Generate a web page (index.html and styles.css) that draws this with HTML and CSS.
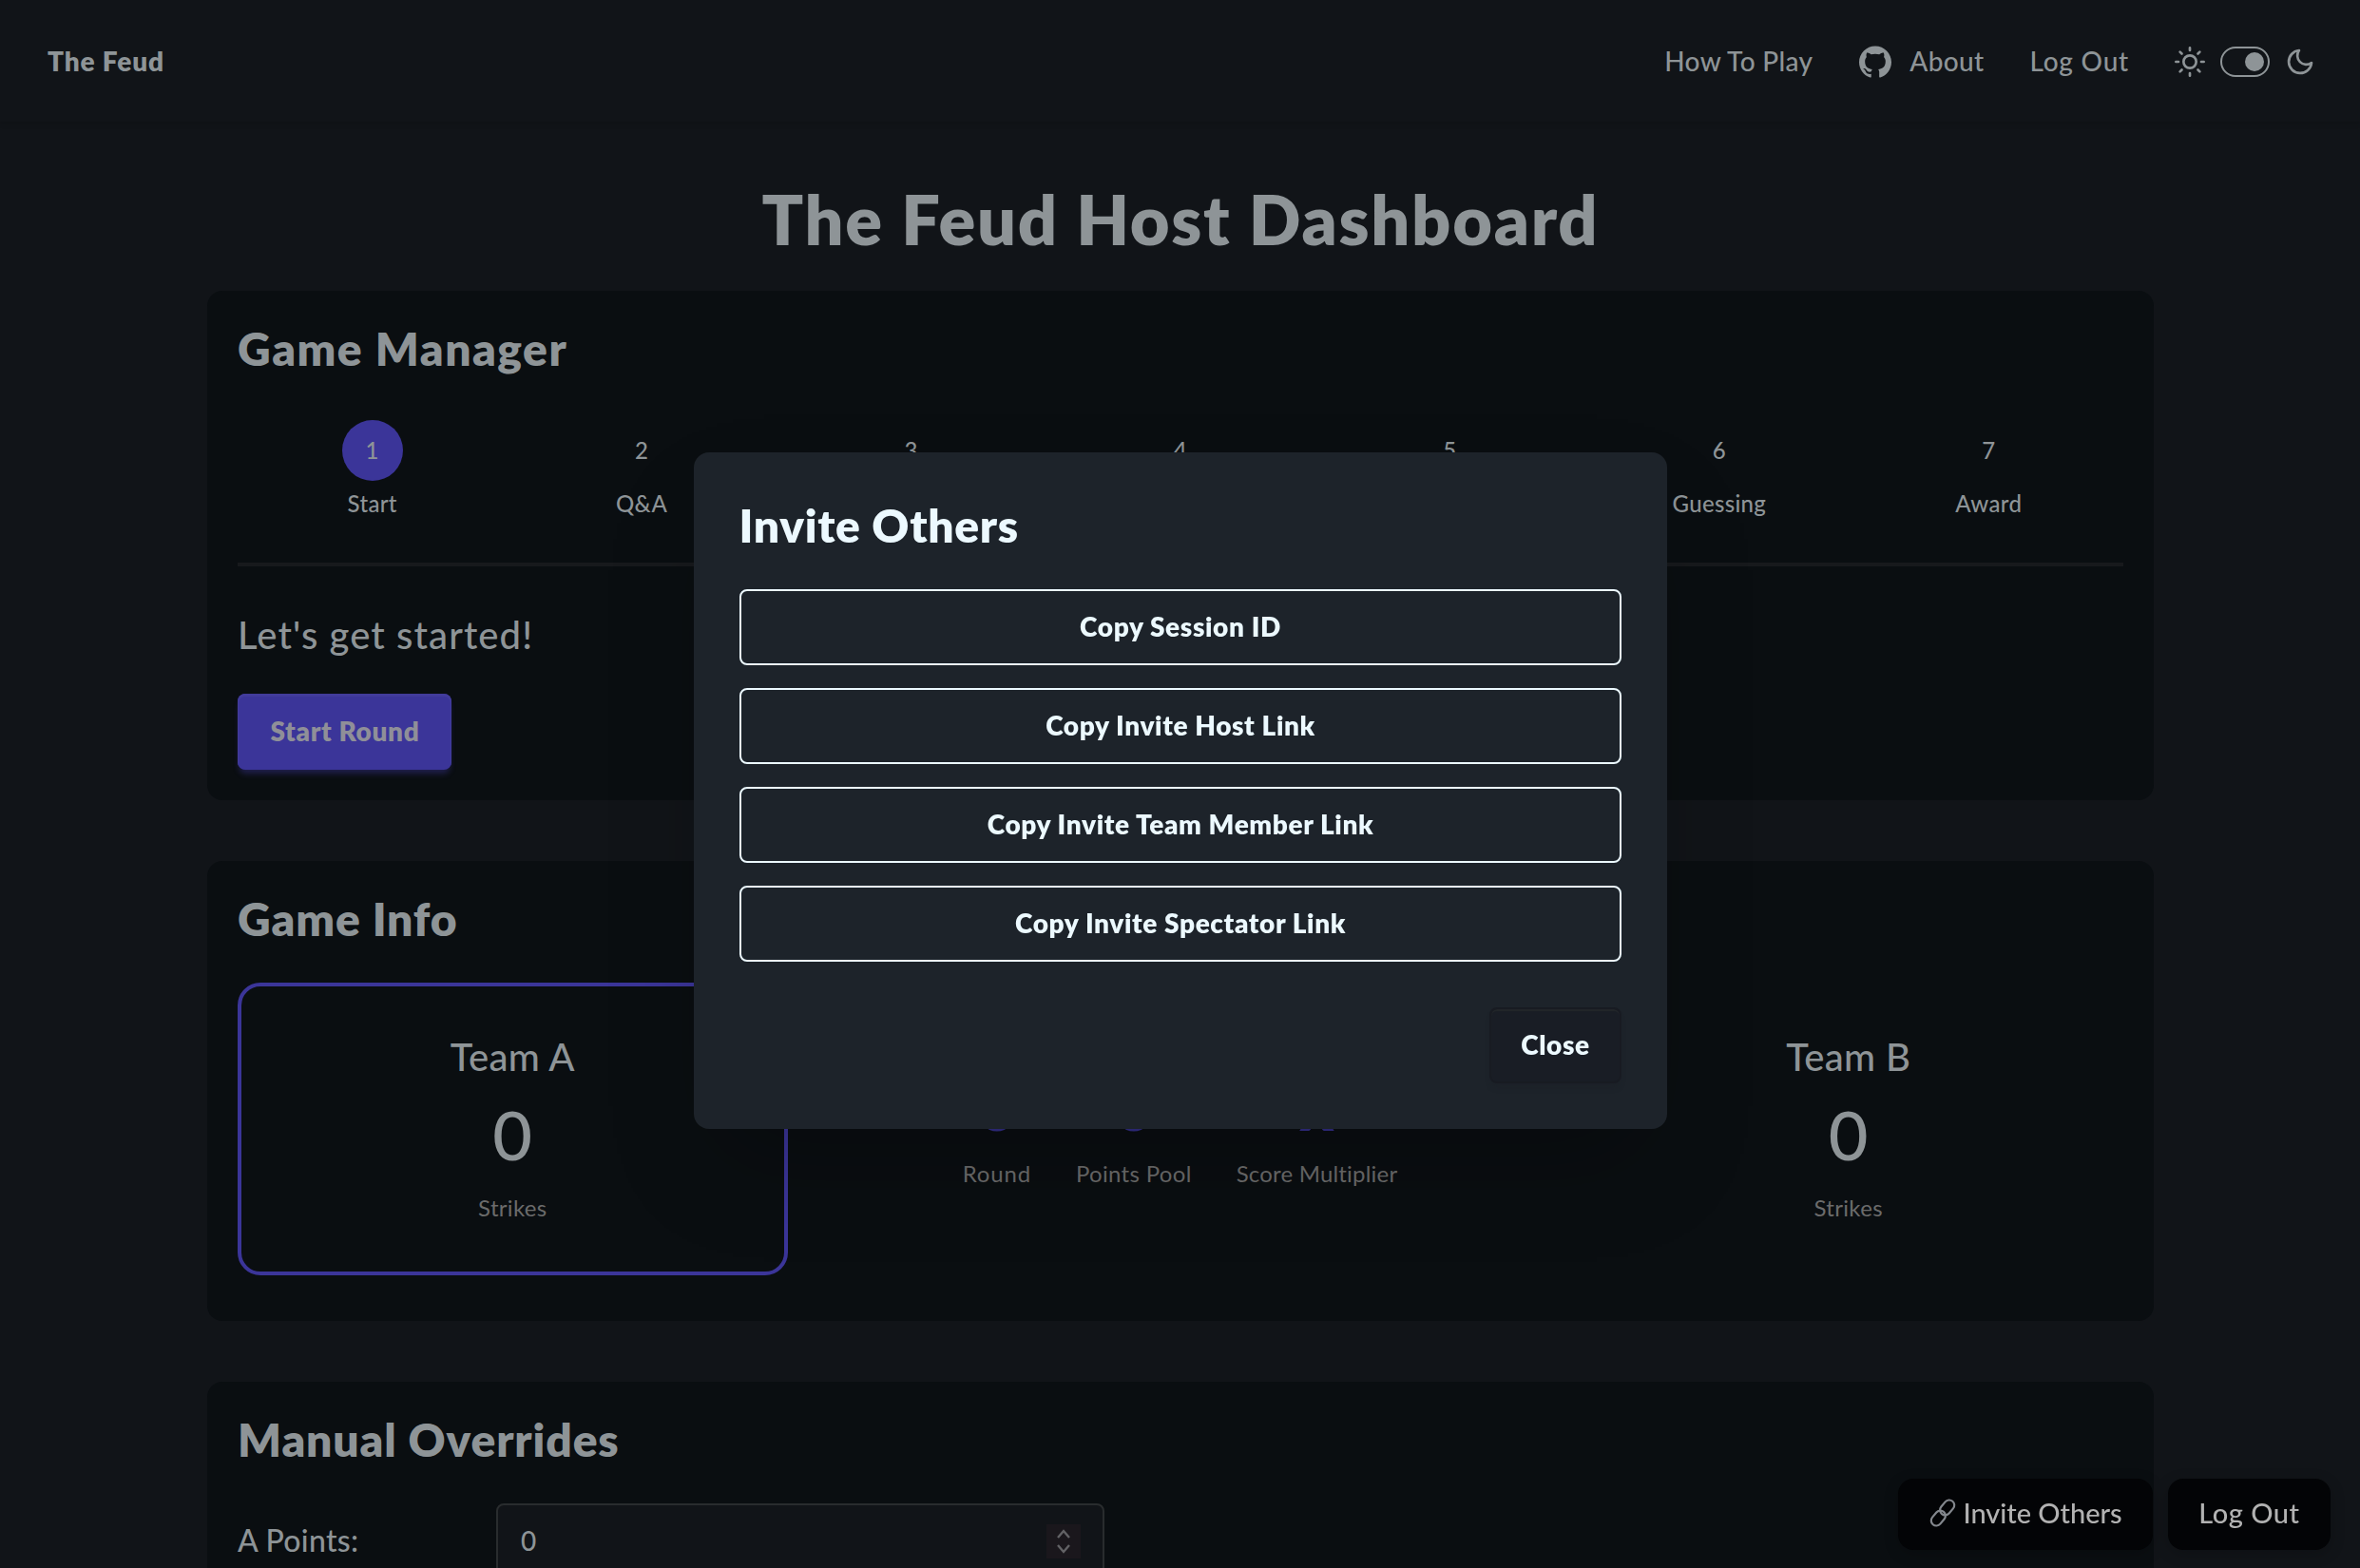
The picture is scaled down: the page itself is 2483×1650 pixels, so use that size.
FILE: index.html
```html
<!DOCTYPE html>
<html lang="en">
<head>
<meta charset="utf-8">
<title>The Feud Host Dashboard</title>
<link rel="stylesheet" href="styles.css">
</head>
<body>
<header class="navbar">
  <a class="brand">The Feud</a>
  <nav class="links">
    <a class="nav-play">How To Play</a>
    <a class="nav-about">
      <svg class="github" viewBox="0 0 24 24" fill="currentColor"><path d="M12 .297c-6.63 0-12 5.373-12 12 0 5.303 3.438 9.8 8.205 11.385.6.113.82-.258.82-.577 0-.285-.01-1.04-.015-2.04-3.338.724-4.042-1.61-4.042-1.61C4.422 18.07 3.633 17.7 3.633 17.7c-1.087-.744.084-.729.084-.729 1.205.084 1.838 1.236 1.838 1.236 1.07 1.835 2.809 1.305 3.495.998.108-.776.417-1.305.76-1.605-2.665-.3-5.466-1.332-5.466-5.93 0-1.31.465-2.38 1.235-3.22-.135-.303-.54-1.523.105-3.176 0 0 1.005-.322 3.3 1.23.96-.267 1.98-.399 3-.405 1.02.006 2.04.138 3 .405 2.28-1.552 3.285-1.23 3.285-1.23.645 1.653.24 2.873.12 3.176.765.84 1.23 1.91 1.23 3.22 0 4.61-2.805 5.625-5.475 5.92.42.36.81 1.096.81 2.22 0 1.606-.015 2.896-.015 3.286 0 .315.21.69.825.57C20.565 22.092 24 17.592 24 12.297c0-6.627-5.373-12-12-12"/></svg>
      <span>About</span>
    </a>
    <a class="nav-logout">Log Out</a>
    <div class="theme">
      <svg class="theme-icon" viewBox="0 0 24 24"><circle cx="12" cy="12" r="5"/><path d="M12 1v2M12 21v2M4.22 4.22l1.42 1.42M18.36 18.36l1.42 1.42M1 12h2M21 12h2M4.22 19.78l1.42-1.42M18.36 5.64l1.42-1.42"/></svg>
      <span class="toggle"><span class="knob"></span></span>
      <svg class="theme-icon" viewBox="0 0 24 24"><path d="M21 12.79A9 9 0 1 1 11.21 3 7 7 0 0 0 21 12.79z"/></svg>
    </div>
  </nav>
</header>

<main class="page">
  <h1>The Feud Host Dashboard</h1>

  <section class="card manager">
    <h2 class="wide">Game Manager</h2>
    <ol class="steps">
      <li><span class="dot active">1</span><span class="step-label">Start</span></li>
      <li><span class="dot">2</span><span class="step-label">Q&amp;A</span></li>
      <li><span class="dot">3</span></li>
      <li><span class="dot">4</span></li>
      <li><span class="dot">5</span></li>
      <li><span class="dot">6</span><span class="step-label">Guessing</span></li>
      <li><span class="dot">7</span><span class="step-label">Award</span></li>
    </ol>
    <hr>
    <p class="lead">Let's get started!</p>
    <button class="btn primary">Start Round</button>
  </section>

  <section class="card info">
    <h2>Game Info</h2>
    <div class="board">
      <div class="team current"><h3>Team A</h3><div class="score">0</div><div class="muted">Strikes</div></div>
      <div class="stats">
        <div class="stat round"><b>0</b><span class="muted">Round</span></div>
        <div class="stat"><b>0</b><span class="muted">Points Pool</span></div>
        <div class="stat"><b>x</b><span class="muted tight">Score Multiplier</span></div>
      </div>
      <div class="team"><h3>Team B</h3><div class="score">0</div><div class="muted">Strikes</div></div>
    </div>
  </section>

  <section class="card overrides">
    <h2>Manual Overrides</h2>
    <div class="field">
      <label>A Points:</label>
      <div class="input"><span>0</span>
        <svg class="spinner" viewBox="0 0 36 36"><path d="M12 14l6-7 6 7M12 22l6 7 6-7"/></svg>
      </div>
    </div>
  </section>
</main>

<div class="floating">
  <button class="pill invite">
    <svg class="chain" viewBox="0 0 30 30"><g transform="rotate(-50 15 15)"><rect x="-1" y="9.6" width="17.5" height="10.8" rx="5.4"/><rect x="13.5" y="9.6" width="17.5" height="10.8" rx="5.4"/></g></svg>
    <span>Invite Others</span>
  </button>
  <button class="pill">Log Out</button>
</div>

<div class="backdrop">
  <div class="modal">
    <h2>Invite Others</h2>
    <div class="options">
      <button class="btn outline">Copy Session ID</button>
      <button class="btn outline">Copy Invite Host Link</button>
      <button class="btn outline">Copy Invite Team Member Link</button>
      <button class="btn outline">Copy Invite Spectator Link</button>
    </div>
    <div class="actions"><button class="btn close">Close</button></div>
  </div>
</div>
</body>
</html>
```
FILE: styles.css
```css
* { box-sizing: border-box; margin: 0; padding: 0; }

html, body { height: 100%; overflow: hidden; }

body {
  background: #111418;
  color: #8e9497;
  font-family: Lato, "Liberation Sans", sans-serif;
  font-weight: 500;
  letter-spacing: .02em;
}

button { font: inherit; color: inherit; letter-spacing: inherit; border: 0; background: none; }

/* Navigation */
.navbar {
  display: flex;
  align-items: center;
  justify-content: space-between;
  height: 128px;
  padding: 0 47px 0 50px;
  font-size: 28px;
  box-shadow: 0 2px 6px rgba(0, 0, 0, .14);
}
.brand { font-weight: 800; letter-spacing: .031em; padding-bottom: 1px; }
.links { display: flex; align-items: center; gap: 48px; }
.nav-play { letter-spacing: .012em; padding: 0 1px 1px 0; }
.nav-about { display: flex; align-items: center; gap: 19px; }
.nav-about span { padding-bottom: 1px; }
.nav-logout { letter-spacing: .028em; padding-bottom: 1px; }
.github { width: 34px; height: 34px; margin-top: 1px; }
.theme { display: flex; align-items: center; gap: 16px; padding-top: 2px; }
.theme-icon {
  width: 32px;
  height: 32px;
  fill: none;
  stroke: currentColor;
  stroke-width: 2;
  stroke-linecap: round;
  stroke-linejoin: round;
}
.toggle {
  display: flex;
  justify-content: flex-end;
  align-items: center;
  width: 52px;
  height: 32px;
  padding-right: 4px;
  border: 2px solid currentColor;
  border-radius: 16px;
}
.knob { width: 20px; height: 20px; border-radius: 50%; background: currentColor; }

/* Page */
.page { display: flex; flex-direction: column; width: 2048px; margin: 0 0 0 218px; }
h1 {
  margin: 62px 0 36px;
  font-size: 72px;
  font-weight: 800;
  line-height: 80px;
  letter-spacing: .024em;
  text-align: center;
}
h2 { font-size: 48px; line-height: 58px; height: 56px; font-weight: 800; letter-spacing: .018em; }
.wide { letter-spacing: .031em; }
.card { padding: 32px; border-radius: 16px; background: #0a0e11; margin-bottom: 64px; }

/* Game manager */
.steps { display: grid; grid-template-columns: repeat(7, 1fr); height: 103px; margin-top: 48px; list-style: none; font-size: 24px; }
.steps li { display: flex; flex-direction: column; align-items: center; gap: 8px; }
.dot { display: flex; align-items: center; justify-content: center; width: 64px; height: 64px; border-radius: 50%; padding-bottom: 2px; }
.dot.active { background: #3b3599; }
.step-label { line-height: 32px; }
hr { height: 4px; margin: 47px 0; border: 0; background: #17191c; }
.lead { font-size: 40px; line-height: 50px; height: 48px; letter-spacing: .027em; margin-bottom: 39px; }

.btn {
  display: flex;
  align-items: center;
  justify-content: center;
  height: 80px;
  padding: 0 0 3px 1px;
  border-radius: 8px;
  font-size: 28px;
  font-weight: 800;
  letter-spacing: .022em;
}
.btn.primary {
  width: 225px;
  background: #3b3599;
  letter-spacing: .023em;
  box-shadow: inset 0 2px 0 1px #423c9b, 0 6px 6px -2px rgba(59, 53, 153, .45);
  color: #8f8f98;
}

/* Game info */
.info { height: 484px; }
.board { display: flex; justify-content: space-between; margin-top: 40px; }
.team {
  display: flex;
  flex-direction: column;
  align-items: center;
  width: 578.6px;
  height: 308px;
  padding-top: 50px;
  border: 4px solid transparent;
  border-radius: 24px;
}
.team.current { border-color: #3b3599; }
.team h3 { font-size: 40px; line-height: 48px; font-weight: 500; }
.score { margin: 21px 0 26px; font-size: 72px; line-height: 72px; }
.muted { font-size: 24px; line-height: 32px; font-weight: 400; color: #6b6b6b; }
.tight { letter-spacing: .008em; }
.stats { display: flex; gap: 47px; padding: 92px 1px 0 0; }
.stat { display: flex; flex-direction: column; align-items: center; gap: 21px; }
.stat b { height: 72px; font-size: 72px; line-height: 72px; font-weight: 800; color: #332e88; letter-spacing: 0; }
.stat:last-child b { font-size: 66px; line-height: 77px; }
.round .muted { letter-spacing: .035em; }

/* Manual overrides */
.overrides { margin-bottom: 0; }
.field { display: flex; align-items: center; margin-top: 40px; }
.field label { width: 272px; padding-bottom: 4px; font-size: 32px; }
.input {
  display: flex;
  align-items: center;
  justify-content: space-between;
  width: 640px;
  height: 80px;
  padding: 0 23px 0 24px;
  border: 2px solid #292c2e;
  border-radius: 8px;
  background: #111418;
  font-size: 28px;
}
.input span { padding-bottom: 3px; }
.spinner { width: 36px; height: 36px; background: #1a171c; fill: none; stroke: #626265; stroke-width: 2.4; }

/* Floating actions */
.floating { position: fixed; right: 31px; bottom: 19px; display: flex; gap: 16px; font-size: 29px; color: #b2b2b2; }
.pill {
  display: flex;
  align-items: center;
  justify-content: center;
  width: 171px;
  height: 75px;
  padding-bottom: 4px;
  border-radius: 16px;
  background: #030406;
  letter-spacing: .018em;
  box-shadow: 0 4px 16px rgba(0, 0, 0, .2);
}
.invite { width: 268px; gap: 6px; letter-spacing: -.001em; }
.chain { width: 30px; height: 30px; overflow: visible; fill: none; stroke: #83878d; stroke-width: 2.2; }

/* Dialog */
.backdrop { position: fixed; inset: 0; display: flex; align-items: flex-start; justify-content: center; padding-top: 476px; color: #ecf9ff; }
.modal {
  width: 1024px;
  height: 712px;
  padding: 48px;
  border-radius: 16px;
  background: #1d232a;
  box-shadow: 0 50px 100px -24px rgba(0, 0, 0, .25);
}
.modal h2 { letter-spacing: .014em; }
.options { display: flex; flex-direction: column; gap: 24px; margin-top: 40px; }
.outline { border: 2px solid #ecf9ff; }
.actions { display: flex; justify-content: flex-end; margin-top: 48px; }
.close {
  width: 139px;
  background: #191d25;
  border: 2px solid #181b22;
  box-shadow: inset 0 2px 0 #212529, 0 6px 6px -2px rgba(25, 29, 37, .3);
}
```
